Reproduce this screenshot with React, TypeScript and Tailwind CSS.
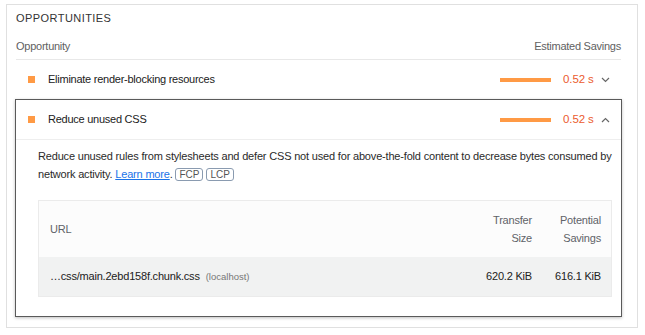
import React from "react";

const FONT = { fontFamily: '"Liberation Sans", Arial, sans-serif' };

// small chevron used at the end of each audit row
const Chevron = ({ up }: { up?: boolean }) => (
  <svg width="9" height="6" viewBox="0 0 9 6" className="text-[#666]">
    <path
      d={up ? "M1 5 L4.5 1.5 L8 5" : "M1 1 L4.5 4.5 L8 1"}
      fill="none"
      stroke="currentColor"
      strokeWidth="1.2"
    />
  </svg>
);

const Savings = ({ up }: { up?: boolean }) => (
  <div className="flex items-center">
    <div className="w-[51px] h-[4px] bg-[#ff9a45]" />
    <span className="ml-[12px] w-[38px] text-[11.5px] tracking-[-0.1px] text-[#eb5b2e]">0.52 s</span>
    <span className="flex w-[9px] justify-center">
      <Chevron up={up} />
    </span>
  </div>
);

const Tag = ({ children }: { children: React.ReactNode }) => (
  <span className="inline-block rounded-[3px] border border-[#8a9bb0] px-[3px] text-[10px] leading-[11px] tracking-normal text-[#555]">
    {children}
  </span>
);

export default function App() {
  return (
    <div className="w-[645px] h-[335px] bg-white pl-[6px] pt-[4px]" style={FONT}>
      <div className="w-[632px] h-[324px] border border-[#e0e0e0] pl-[9px] pr-[16px]">
        {/* section title */}
        <div className="pt-[5px] h-[28px] text-[11px] tracking-[0.04em] text-[#333]">
          OPPORTUNITIES
        </div>

        {/* column header */}
        <div className="flex justify-between items-center h-[27px] border-b border-[#e8e8e8] text-[11px] tracking-[-0.25px] text-[#616161]">
          <span>Opportunity</span>
          <span>Estimated Savings</span>
        </div>

        {/* collapsed audit */}
        <div className="flex items-center justify-between h-[39px] pl-[12px] pr-[11px]">
          <div className="flex items-center">
            <span className="w-[7px] h-[7px] bg-[#ff9a45]" />
            <span className="ml-[13px] text-[11px] tracking-[-0.25px] text-[#212121]">
              Eliminate render-blocking resources
            </span>
          </div>
          <Savings />
        </div>

        {/* expanded audit */}
        <div className="-ml-[1px] w-[607px] border border-[#5a5a5a] shadow-[0_1px_3px_rgba(0,0,0,0.25)]">
          <div className="flex items-center justify-between h-[40px] pl-[12px] pr-[11px] border-b border-[#eeeeee]">
            <div className="flex items-center">
              <span className="w-[7px] h-[7px] bg-[#ff9a45]" />
              <span className="ml-[13px] text-[11px] tracking-[-0.25px] text-[#212121]">
                Reduce unused CSS
              </span>
            </div>
            <Savings up />
          </div>

          <div className="pl-[22px] pr-[8px] pt-[7px] pb-[19px]">
            <p className="text-[11px] leading-[18px] tracking-[-0.18px] text-[#2a2a2a]">
              Reduce unused rules from stylesheets and defer CSS not used for above-the-fold content to
              decrease bytes consumed by network activity.{" "}
              <a className="text-[#1a73e8] underline">Learn more</a>. <Tag>FCP</Tag> <Tag>LCP</Tag>
            </p>

            <div className="mt-[17px] w-[574px] border border-[#ebebeb] text-[11px] tracking-[-0.2px]">
              <div className="flex items-center h-[56px] bg-[#fcfcfc] text-[#5f6368] leading-[18px]">
                <span className="flex-1 pl-[11px]">URL</span>
                <span className="w-[80px] text-right">
                  Transfer
                  <br />
                  Size
                </span>
                <span className="w-[79px] pr-[10px] text-right">
                  Potential
                  <br />
                  Savings
                </span>
              </div>
              <div className="flex items-center h-[39px] bg-[#f1f2f2] text-[#212121]">
                <span className="flex-1 pl-[11px]">
                  …css/main.2ebd158f.chunk.css
                  <span className="ml-[6px] text-[9.5px] tracking-normal text-[#777]">(localhost)</span>
                </span>
                <span className="w-[80px] text-right">620.2 KiB</span>
                <span className="w-[79px] pr-[10px] text-right">616.1 KiB</span>
              </div>
            </div>
          </div>
        </div>
      </div>
    </div>
  );
}
